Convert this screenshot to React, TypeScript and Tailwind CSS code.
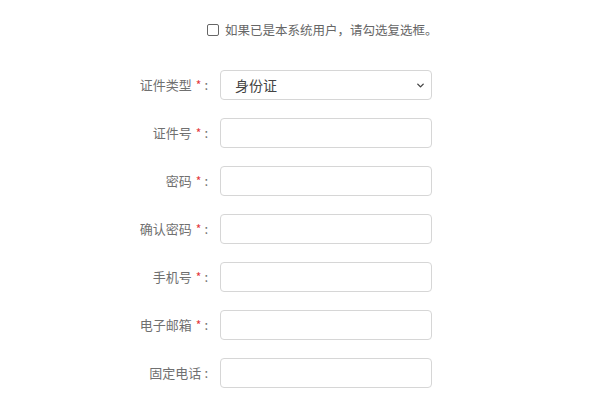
import { ChevronDown } from "lucide-react";

type Field = {
  label: string;
  required: boolean;
  type?: string;
};

const fields: Field[] = [
  { label: "证件号", required: true },
  { label: "密码", required: true, type: "password" },
  { label: "确认密码", required: true, type: "password" },
  { label: "手机号", required: true },
  { label: "电子邮箱", required: true },
  { label: "固定电话", required: false },
];

function Label({ text, required }: { text: string; required: boolean }) {
  return (
    <label className="w-[100px] shrink-0 pr-[12px] text-right text-[13px] text-[#707070]">
      {text}
      {required && <span className="ml-[4px] text-[12px] text-[#e4393c]">*</span>}
      <span className="ml-[3px]">:</span>
    </label>
  );
}

export default function App() {
  return (
    <div
      className="h-[400px] w-[600px] overflow-hidden bg-white"
      style={{ fontFamily: '"Noto Sans CJK SC", "Noto Sans", sans-serif' }}
    >
      {/* Existing user */}
      <div className="flex items-center pl-[207px] pt-[22px]">
        <input
          type="checkbox"
          className="h-[12px] w-[12px] appearance-none rounded-[2px] border border-[#666] bg-white"
        />
        <span className="ml-[6px] text-[12.5px] leading-[16px] text-[#666]">
          如果已是本系统用户，请勾选复选框。
        </span>
      </div>

      {/* Form */}
      <div className="ml-[120px] mt-[32px] flex flex-col gap-[18px]">
        <div className="flex items-center">
          <Label text="证件类型" required />
          <div className="relative h-[30px] w-[212px]">
            <select className="h-full w-full appearance-none rounded-[4px] border border-[#d6d6d6] bg-white pl-[14px] text-[14px] text-[#444] outline-none">
              <option>身份证</option>
            </select>
            <ChevronDown
              className="pointer-events-none absolute right-[6px] top-[10px] h-[11px] w-[11px] text-[#444]"
              strokeWidth={3}
            />
          </div>
        </div>

        {fields.map((f) => (
          <div key={f.label} className="flex items-center">
            <Label text={f.label} required={f.required} />
            <input
              type={f.type ?? "text"}
              className="h-[30px] w-[212px] rounded-[4px] border border-[#d6d6d6] bg-white px-[10px] text-[14px] outline-none"
            />
          </div>
        ))}
      </div>
    </div>
  );
}
